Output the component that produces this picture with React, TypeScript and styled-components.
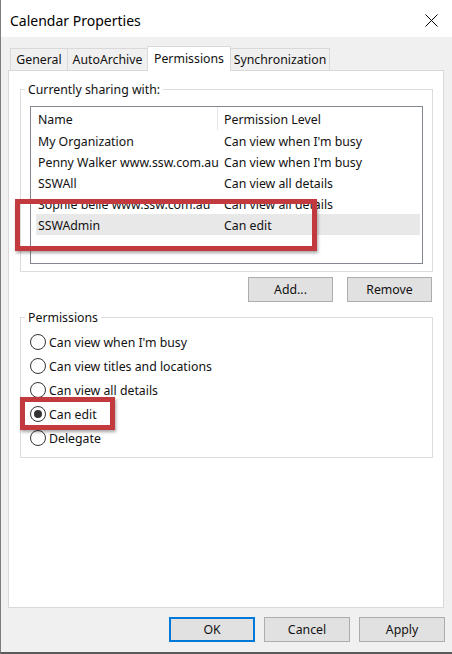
import React from "react";
import styled, { createGlobalStyle } from "styled-components";

const GlobalStyle = createGlobalStyle`
  html, body { margin: 0; padding: 0; background: #ffffff; }
  * { box-sizing: border-box; }
`;

const Window = styled.div`
  width: 452px;
  height: 654px;
  background: #f0f0f0;
  border-left: 1px solid #7d7d7d;
  border-bottom: 2px solid #5a5a5a;
  display: flex;
  flex-direction: column;
  font-family: "Noto Sans", "Segoe UI", sans-serif;
  font-size: 12.3px;
  color: #111;
  overflow: hidden;
`;

const TitleBar = styled.div`
  height: 37px;
  flex: none;
  background: #ffffff;
  display: flex;
  align-items: center;
  justify-content: space-between;
  padding: 3px 0 0 9px;
`;

const Title = styled.div`
  font-size: 14px;
  color: #000;
`;

const CloseButton = styled.div`
  width: 42px;
  height: 34px;
  display: flex;
  align-items: center;
  justify-content: center;
`;

const TabStrip = styled.div`
  display: flex;
  align-items: flex-end;
  height: 24px;
  margin: 9px 0 0 9px;
  position: relative;
  z-index: 2;
`;

const Tab = styled.div<{ $active?: boolean; $width: number }>`
  width: ${(p) => p.$width}px;
  height: ${(p) => (p.$active ? 25 : 22)}px;
  margin-bottom: ${(p) => (p.$active ? -1 : 0)}px;
  padding-bottom: ${(p) => (p.$active ? 2 : 0)}px;
  margin-left: -1px;
  display: flex;
  align-items: center;
  justify-content: center;
  border: 1px solid #d9d9d9;
  border-bottom: none;
  background: ${(p) => (p.$active ? "#ffffff" : "#f0f0f0")};
  color: #111;
  white-space: nowrap;
  &:first-child { margin-left: 0; }
`;

const Panel = styled.div`
  height: 538px;
  margin: 0 8px 0 7px;
  border: 1px solid #d9d9d9;
  background: #ffffff;
  padding: 10px 10px 0 11px;
  display: flex;
  flex-direction: column;
`;

const GroupBox = styled.fieldset<{ $gap?: number }>`
  margin: ${(p) => p.$gap ?? 0}px 0 0 0;
  padding: 0 9px 7px 9px;
  border: 1px solid #dcdcdc;
  min-width: 0;
`;

const GroupLabel = styled.legend`
  padding: 0 3px;
  margin-left: -5px;
  line-height: 17px;
  font-size: 12.3px;
  color: #111;
`;

const ListBox = styled.div`
  margin-top: 8px;
  height: 158px;
  border: 1px solid #828790;
  background: #ffffff;
  padding: 0 2px 0 5px;
`;

const HeaderRow = styled.div`
  display: grid;
  grid-template-columns: 181px 1fr;
  height: 23px;
`;

const HeaderCell = styled.div<{ $divider?: boolean }>`
  display: flex;
  align-items: center;
  padding-left: ${(p) => (p.$divider ? 6 : 2)}px;
  padding-top: 1px;
  border-left: ${(p) => (p.$divider ? "1px solid #e5e5e5" : "none")};
  white-space: nowrap;
`;

const Row = styled.div<{ $selected?: boolean }>`
  position: relative;
  display: grid;
  grid-template-columns: 186px 1fr;
  height: 21px;
  background: ${(p) => (p.$selected ? "#e8e8e8" : "transparent")};
`;

const Cell = styled.div`
  display: flex;
  align-items: center;
  padding: 2px 0 0 2px;
  white-space: nowrap;
  overflow: hidden;
`;

const Callout = styled.div<{ $left: number; $top: number; $w: number; $h: number }>`
  position: absolute;
  left: ${(p) => p.$left}px;
  top: ${(p) => p.$top}px;
  width: ${(p) => p.$w}px;
  height: ${(p) => p.$h}px;
  border: 5px solid #c23a3e;
  box-shadow: 1px 2px 3px rgba(0, 0, 0, 0.35);
  pointer-events: none;
  z-index: 3;
`;

const ButtonRow = styled.div<{ $gap: number; $top: number; $right?: number }>`
  display: flex;
  justify-content: flex-end;
  gap: ${(p) => p.$gap}px;
  margin-top: ${(p) => p.$top}px;
  padding-right: ${(p) => p.$right ?? 0}px;
`;

const Button = styled.div<{ $width: number; $default?: boolean }>`
  width: ${(p) => p.$width}px;
  height: 25px;
  display: flex;
  align-items: center;
  justify-content: center;
  background: #e1e1e1;
  border: ${(p) => (p.$default ? "2px solid #0078d7" : "1px solid #adadad")};
  color: #111;
`;

const RadioList = styled.div`
  padding-top: 4px;
  display: flex;
  flex-direction: column;
`;

const RadioRow = styled.div`
  position: relative;
  height: 24px;
  display: flex;
  align-items: center;
  gap: 3px;
`;

const RadioLabel = styled.span`
  padding-top: 1px;
`;

const RadioCircle = styled.span<{ $checked?: boolean }>`
  width: 16px;
  height: 16px;
  border-radius: 50%;
  border: 1px solid #333;
  background: #fff;
  display: flex;
  align-items: center;
  justify-content: center;
  flex: none;
  &::after {
    content: "";
    width: 8px;
    height: 8px;
    border-radius: 50%;
    background: #333;
    display: ${(p) => (p.$checked ? "block" : "none")};
  }
`;

const tabs = [
  { label: "General", width: 58 },
  { label: "AutoArchive", width: 81 },
  { label: "Permissions", width: 84, active: true },
  { label: "Synchronization", width: 100 },
];

const sharing = [
  { name: "My Organization", level: "Can view when I'm busy" },
  { name: "Penny Walker www.ssw.com.au", level: "Can view when I'm busy" },
  { name: "SSWAll", level: "Can view all details" },
  { name: "Sophie belle www.ssw.com.au", level: "Can view all details" },
  { name: "SSWAdmin", level: "Can edit", selected: true },
];

const levels = [
  "Can view when I'm busy",
  "Can view titles and locations",
  "Can view all details",
  "Can edit",
  "Delegate",
];

export default function App() {
  return (
    <>
      <GlobalStyle />
      <Window>
        <TitleBar>
          <Title>Calendar Properties</Title>
          <CloseButton>
            <svg width="13" height="13" viewBox="0 0 13 13">
              <path d="M0.5 0.5 L12.5 12.5 M12.5 0.5 L0.5 12.5" stroke="#000" strokeWidth="1" fill="none" />
            </svg>
          </CloseButton>
        </TitleBar>
        <TabStrip>
          {tabs.map((t) => (
            <Tab key={t.label} $width={t.width} $active={t.active}>
              {t.label}
            </Tab>
          ))}
        </TabStrip>
        <Panel>
          <GroupBox>
            <GroupLabel>Currently sharing with:</GroupLabel>
            <ListBox>
              <HeaderRow>
                <HeaderCell>Name</HeaderCell>
                <HeaderCell $divider>Permission Level</HeaderCell>
              </HeaderRow>
              {sharing.map((s) => (
                <Row key={s.name} $selected={s.selected}>
                  <Cell>{s.name}</Cell>
                  <Cell>{s.level}</Cell>
                  {s.selected && <Callout $left={-21} $top={-15} $w={302} $h={52} />}
                </Row>
              ))}
            </ListBox>
          </GroupBox>
          <ButtonRow $gap={14} $top={5} $right={1}>
            <Button $width={85}>Add...</Button>
            <Button $width={85}>Remove</Button>
          </ButtonRow>
          <GroupBox $gap={7}>
            <GroupLabel>Permissions</GroupLabel>
            <RadioList>
              {levels.map((l) => (
                <RadioRow key={l}>
                  <RadioCircle $checked={l === "Can edit"} />
                  <RadioLabel>{l}</RadioLabel>
                  {l === "Can edit" && <Callout $left={-10} $top={-5} $w={95} $h={33} />}
                </RadioRow>
              ))}
            </RadioList>
          </GroupBox>
        </Panel>
        <ButtonRow $gap={9} $top={9} $right={7}>
          <Button $width={86} $default>OK</Button>
          <Button $width={86}>Cancel</Button>
          <Button $width={86}>Apply</Button>
        </ButtonRow>
      </Window>
    </>
  );
}
